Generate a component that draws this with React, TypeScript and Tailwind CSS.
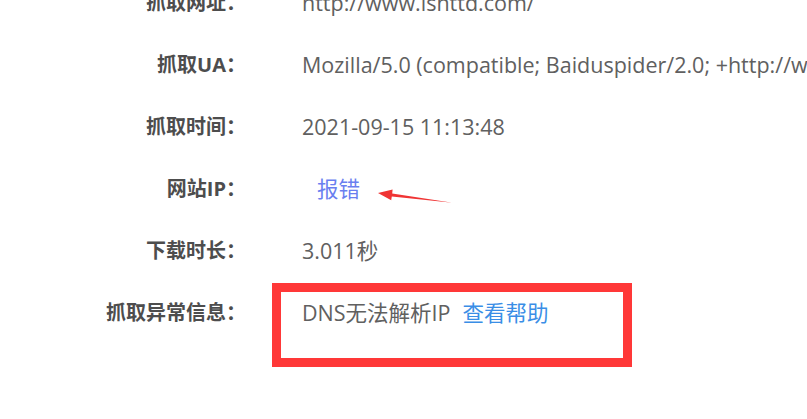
import React from 'react';

type Row = { label: string; value: React.ReactNode };

const rows: Row[] = [
  { label: '抓取网址：', value: 'http://www.ishttd.com/' },
  { label: '抓取UA：', value: 'Mozilla/5.0 (compatible; Baiduspider/2.0; +http://www.baidu.com/search/spider.html)' },
  { label: '抓取时间：', value: '2021-09-15 11:13:48' },
  { label: '网站IP：', value: <a className="ml-[15px] text-[#6a7ff0]">报错</a> },
  { label: '下载时长：', value: '3.011秒' },
  {
    label: '抓取异常信息：',
    value: (
      <span>
        DNS无法解析IP<a className="ml-[12px] text-[#3a8ee6]">查看帮助</a>
      </span>
    ),
  },
];

export default function App() {
  return (
    <div className="relative h-[419px] w-full overflow-hidden bg-white font-['Open_Sans','Noto_Sans_CJK_SC',sans-serif]">
      <div className="-mt-[28px] flex flex-col">
        {rows.map((row) => (
          <div key={row.label} className="flex h-[62px] items-center">
            <div className="w-[246px] shrink-0 text-right text-[20px] font-bold text-[#4d4d4d]">{row.label}</div>
            <div className="ml-[56px] whitespace-nowrap text-[21.5px] text-[#606060]">{row.value}</div>
          </div>
        ))}
      </div>

      {/* annotations */}
      <div className="pointer-events-none absolute left-[272px] top-[283px] h-[84px] w-[360px] border-[9px] border-[#ff3838]" />
      <svg className="pointer-events-none absolute left-0 top-0" width="807" height="419">
        <polygon
          points="378,193 392.6,189.6 392.2,193.6 452.5,202.8 391.8,196.4 391.2,200.2"
          fill="#f03434"
        />
      </svg>
    </div>
  );
}
